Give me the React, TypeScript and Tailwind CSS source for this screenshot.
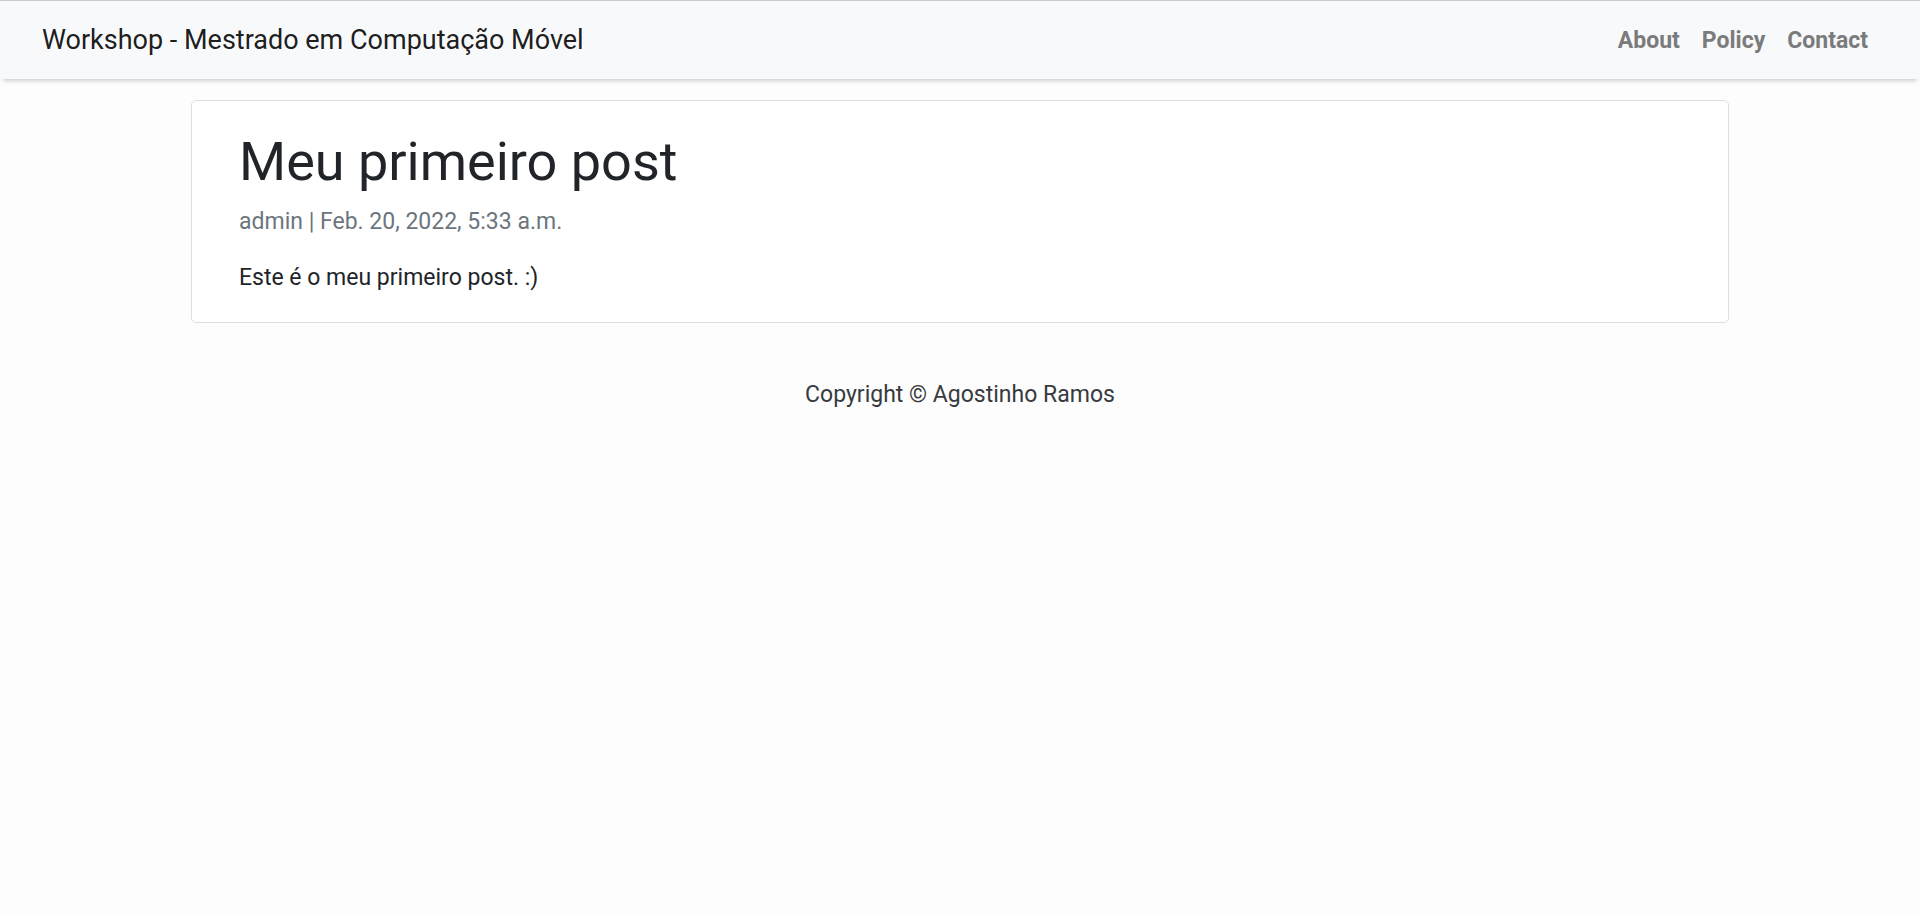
const links = ["About", "Policy", "Contact"];

export default function App() {
  return (
    <div className="min-h-screen bg-[#fdfdfd] font-[Roboto,sans-serif] text-[23px] leading-[34px] text-[#212529]">
      <nav className="flex items-end justify-between border-t border-[#c8cacd] bg-[#f8f9fb] px-[42px] py-5 shadow-[0_5px_4px_-3px_rgba(0,0,0,0.18)]">
        <a href="#" className="text-[27px] leading-[38px] text-black/90">
          Workshop - Mestrado em Computação Móvel
        </a>
        <ul className="flex gap-[22px] pr-[10px] leading-[36px] font-bold text-[#7b7b7b]">
          {links.map((label) => (
            <li key={label}>
              <a href="#">{label}</a>
            </li>
          ))}
        </ul>
      </nav>
      <main className="px-[191px] pt-[21px]">
        <article className="rounded-[5px] border border-[#dfdfdf] bg-white px-[47px] pt-7 pb-[27px]">
          <h1 className="text-[54px] leading-[66px]">Meu primeiro post</h1>
          <p className="mt-[10px] text-[#6c757d]">admin | Feb. 20, 2022, 5:33 a.m.</p>
          <p className="mt-[22px]">Este é o meu primeiro post. :)</p>
        </article>
      </main>
      <footer className="pt-[55px] text-center text-[#373a3e]">Copyright © Agostinho Ramos</footer>
    </div>
  );
}
